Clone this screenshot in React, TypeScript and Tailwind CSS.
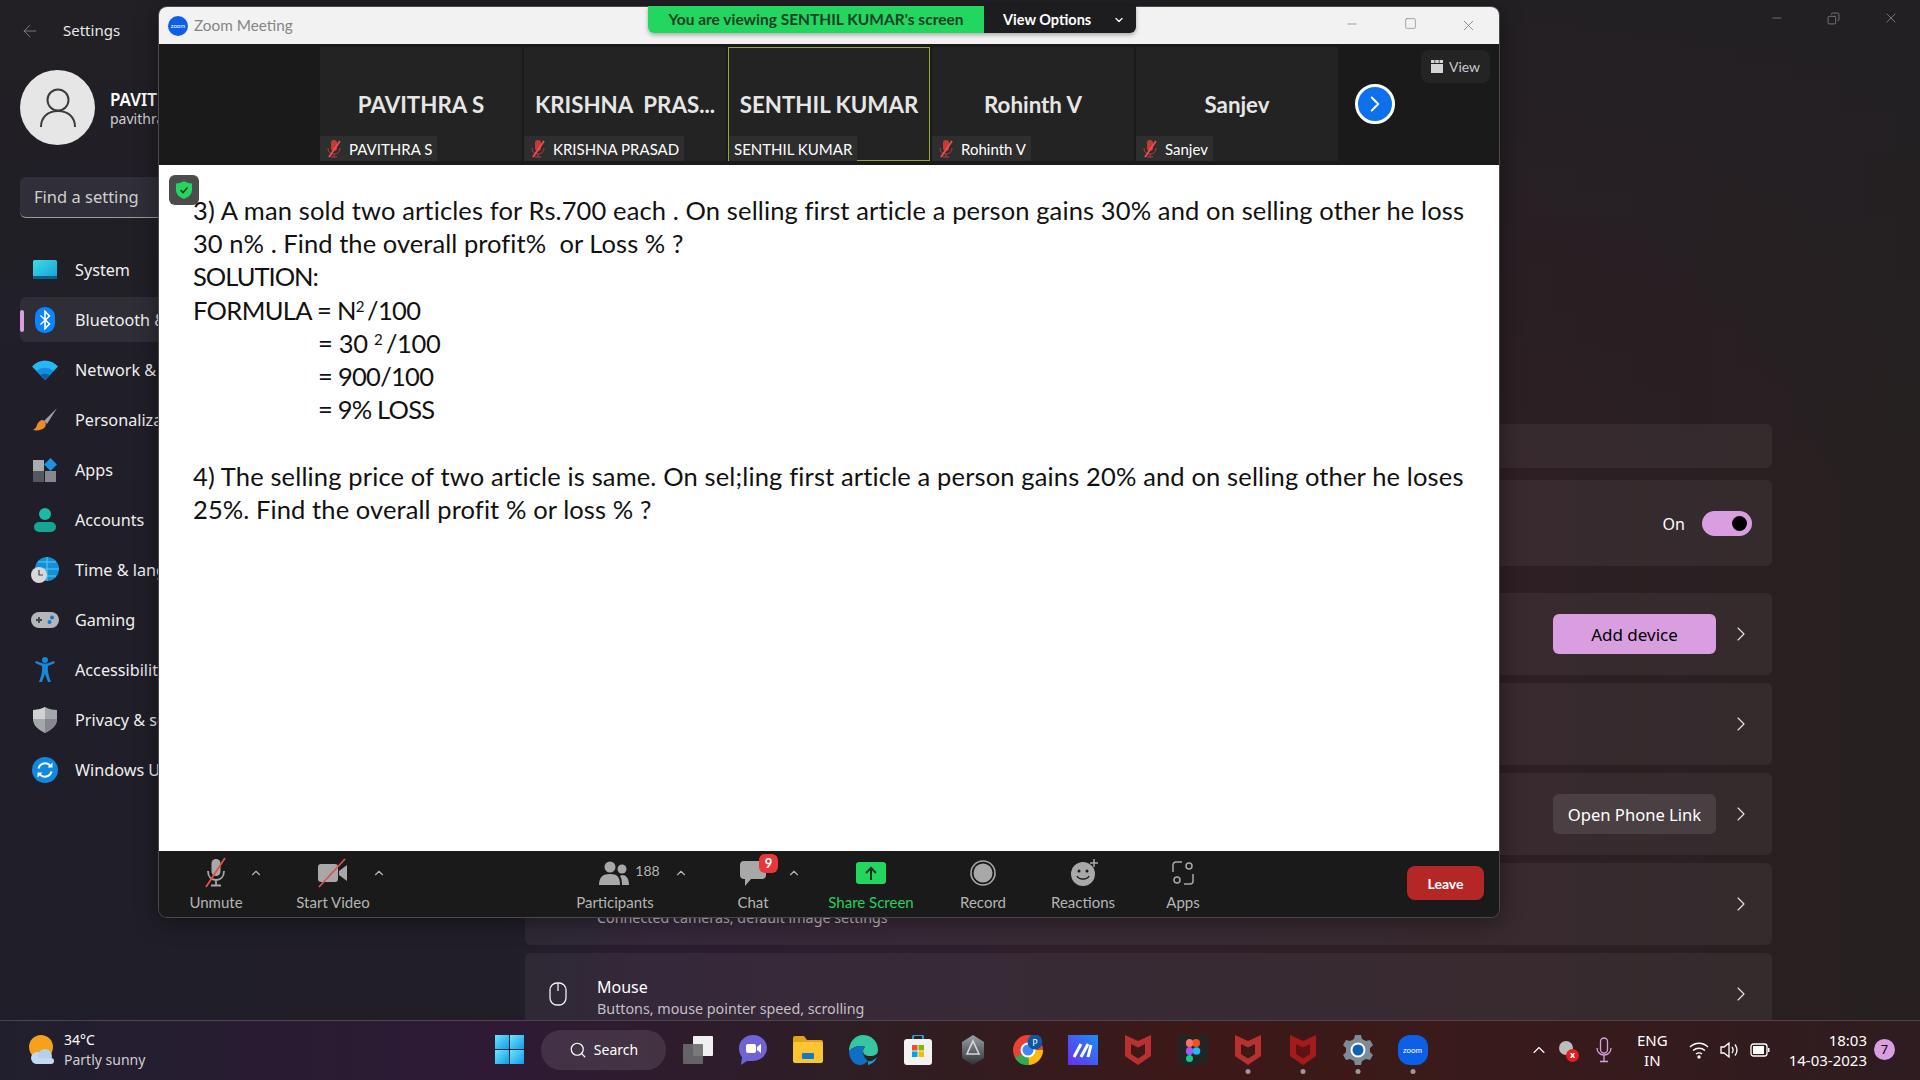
import type { ReactNode } from "react";
import { ChevronUp, ChevronDown, ChevronRight, Search, ArrowLeft, X, Minus, Square, Copy } from "lucide-react";

const segoe = "font-['Noto_Sans','Open_Sans',sans-serif]";

function SystemIcon() {
  return (
    <svg width="24" height="20" viewBox="0 0 24 20">
      <defs>
        <linearGradient id="sys" x1="0" y1="0" x2="1" y2="1">
          <stop offset="0" stopColor="#3fdde6" />
          <stop offset="1" stopColor="#14a0d8" />
        </linearGradient>
      </defs>
      <rect width="24" height="19" rx="1.5" fill="url(#sys)" />
      <path d="M0 16h24v1.5a1.5 1.5 0 0 1-1.5 1.5h-21A1.5 1.5 0 0 1 0 17.500z" fill="#0c5f86" />
    </svg>
  );
}

function BluetoothIcon() {
  return (
    <svg width="20" height="26" viewBox="0 0 20 26">
      <rect width="20" height="26" rx="9.500" fill="#0a84ff" />
      <path d="M5.500 8.500l9 8.500-4.500 4.500V4.500l4.500 4.500-9 8.500" fill="none" stroke="#fff" strokeWidth="1.600" />
    </svg>
  );
}

function WifiIcon() {
  return (
    <svg width="26" height="20" viewBox="0 0 26 20">
      <path d="M0 6.500C7-1.500 19-1.500 26 6.500L13 20z" fill="#29b6f6" />
      <path d="M4.500 11C9 6.500 17 6.500 21.500 11L13 20z" fill="#0f8fdc" />
      <path d="M8.500 15.300c2.500-2 6.500-2 9 0L13 20z" fill="#0a5fa8" />
    </svg>
  );
}

function BrushIcon() {
  return (
    <svg width="26" height="26" viewBox="0 0 26 26">
      <path d="M25 1L12 14l3 3z" fill="#9ca3a8" />
      <path d="M11 13c-3 0-5 2-6 5-.5 2-2 4-4 5 4 1 10 0 12-3 1.500-2 1-5-2-7z" fill="#f08a24" />
    </svg>
  );
}

function AppsIcon() {
  return (
    <svg width="24" height="24" viewBox="0 0 24 24">
      <rect x="0" y="2" width="11" height="11" fill="#a9adb2" />
      <rect x="0" y="13" width="11" height="11" fill="#55585c" />
      <rect x="12" y="13" width="11" height="11" fill="#85898e" />
      <path d="M17.500 0L24 6.500 17.500 13 11 6.500z" fill="#1e90e8" />
    </svg>
  );
}

function AccountIcon() {
  return (
    <svg width="22" height="24" viewBox="0 0 22 24">
      <circle cx="11" cy="6" r="6" fill="#1fb8a6" />
      <rect x="0" y="14" width="22" height="10" rx="5" fill="#14a594" />
    </svg>
  );
}

function TimeIcon() {
  return (
    <svg width="28" height="26" viewBox="0 0 28 26">
      <circle cx="16" cy="12" r="12" fill="#1490d8" />
      <path d="M16 0v24M4 12h24M7 5h18M7 19h18" stroke="#5cc8ee" strokeWidth="1" />
      <circle cx="8" cy="18" r="8" fill="#d8d8d8" />
      <path d="M8 13v5h4" fill="none" stroke="#444" strokeWidth="1.200" />
    </svg>
  );
}

function GamingIcon() {
  return (
    <svg width="28" height="16" viewBox="0 0 28 16">
      <rect width="28" height="16" rx="8" fill="#b3b7bb" />
      <path d="M5 8h6M8 5v6" stroke="#444" strokeWidth="1.800" />
      <circle cx="21" cy="5.500" r="2" fill="#1678d0" />
      <circle cx="18.500" cy="10" r="2" fill="#1678d0" />
    </svg>
  );
}

function AccessIcon() {
  return (
    <svg width="22" height="26" viewBox="0 0 22 26">
      <circle cx="11" cy="3" r="3" fill="#1687d9" />
      <path d="M1 6l7 3c.5 4 0 8-3 16h3l3-8 3 8h3c-3-8-3.500-12-3-16l7-3-1-2-7 2.500h-4L2 4z" fill="#1687d9" />
    </svg>
  );
}

function ShieldIcon() {
  return (
    <svg width="26" height="26" viewBox="0 0 26 26">
      <path d="M13 0c3 2 8 3 12 3v9c0 7-6 11-12 14C7 23 1 19 1 12V3c4 0 9-1 12-3z" fill="#a4a8ac" />
      <path d="M13 0c-3 2-8 3-12 3v9h12z" fill="#d0d2d4" />
      <path d="M13 12h12c0 7-6 11-12 14z" fill="#85898d" />
    </svg>
  );
}

function UpdateIcon() {
  return (
    <svg width="26" height="26" viewBox="0 0 26 26">
      <circle cx="13" cy="13" r="13" fill="#1088e0" />
      <path d="M6.500 11.500A6.800 6.800 0 0 1 18.500 9M19.500 14.500A6.800 6.800 0 0 1 7.500 17" fill="none" stroke="#fff" strokeWidth="2" />
      <path d="M20.500 5.500v5h-5zM5.500 20.500v-5h5z" fill="#fff" />
    </svg>
  );
}

const navItems: { label: string; icon: ReactNode; active?: boolean }[] = [
  { label: "System", icon: <SystemIcon /> },
  { label: "Bluetooth & devices", icon: <BluetoothIcon />, active: true },
  { label: "Network & internet", icon: <WifiIcon /> },
  { label: "Personalization", icon: <BrushIcon /> },
  { label: "Apps", icon: <AppsIcon /> },
  { label: "Accounts", icon: <AccountIcon /> },
  { label: "Time & language", icon: <TimeIcon /> },
  { label: "Gaming", icon: <GamingIcon /> },
  { label: "Accessibility", icon: <AccessIcon /> },
  { label: "Privacy & security", icon: <ShieldIcon /> },
  { label: "Windows Update", icon: <UpdateIcon /> },
];

function Sidebar() {
  return (
    <aside className="w-[525px] shrink-0 pl-5 pr-4">
      <div className="flex h-[61px] items-center text-[#e8e8e8]">
        <ArrowLeft size={20} strokeWidth={1} className="text-[#8a8a8a]" />
        <span className="ml-[23px] text-[15px]">Settings</span>
      </div>
      <div className="mt-[9px] flex items-center">
        <div className="flex h-[75px] w-[75px] items-center justify-center rounded-full bg-[#e6e6e6]">
          <svg width="38" height="40" viewBox="0 0 38 40" fill="none" stroke="#3c3c3c" strokeWidth="2">
            <circle cx="19" cy="12" r="10.500" />
            <path d="M2 39c0-10 7-16 17-16s17 6 17 16" />
          </svg>
        </div>
        <div className="ml-[15px] mt-[1px] leading-tight">
          <p className="text-[17px] font-semibold text-white">PAVITHRA S</p>
          <p className="text-[14px] text-[#cfcfcf]">pavithra@outlook.com</p>
        </div>
      </div>
      <div className="mt-8 flex h-[41px] items-center rounded-md border-b border-b-[#9a9a9a] bg-[#302e38] px-[14px] text-[16.500px] text-[#cfcfcf]">
        Find a setting
      </div>
      <nav className="mt-[29px] flex flex-col gap-[5px]">
        {navItems.map((item) => (
          <div key={item.label} className={`relative flex h-[45px] items-center rounded-md text-[16.200px] text-[#f0f0f0] ${item.active ? "bg-[#2f2d36]" : ""}`}>
            {item.active && <span className="absolute left-0 top-[13px] h-[22px] w-[4px] rounded bg-[#d89ee0]" />}
            <span className="flex w-[50px] justify-center">{item.icon}</span>
            <span className="ml-[5px] pt-[2px]">{item.label}</span>
          </div>
        ))}
      </nav>
    </aside>
  );
}

function Card({ className, children }: { className: string; children?: ReactNode }) {
  return <div className={`flex shrink-0 items-center rounded-md bg-white/5 pr-[19px] ${className}`}>{children}</div>;
}

function SettingsChevron() {
  return <ChevronRight size={24} strokeWidth={1.100} className="ml-[13px] text-[#e8e8e8]" />;
}

function MainPane() {
  return (
    <main className="flex-1 text-white">
      <div className="flex h-[36px] justify-end pr-[1px] text-[#8d8d8d]">
        <span className="flex w-[57px] items-center justify-center"><Minus size={14} strokeWidth={1.200} /></span>
        <span className="flex w-[57px] items-center justify-center"><Copy size={13} strokeWidth={1.400} className="-scale-x-100" /></span>
        <span className="flex w-[57px] items-center justify-center"><X size={16} strokeWidth={1.200} /></span>
      </div>
      <div className="mr-[148px] mt-[388px] flex flex-col">
        <Card className="h-[44px]" />
        <Card className="mt-3 h-[86px] justify-end">
          <span className="mr-[17px] pt-[2px] text-[16px]">On</span>
          <span className="flex h-[25px] w-[50px] items-center justify-end rounded-full bg-[#d89ee0] pr-[5px]">
            <span className="h-[15px] w-[15px] rounded-full bg-black" />
          </span>
          <span className="w-[1px]" />
        </Card>
        <Card className="mt-[27px] h-[82px] justify-end">
          <span className="flex h-[40px] w-[163px] items-center justify-center rounded-md bg-[#d89ee0] pt-[2px] text-[17px] text-black">Add device</span>
          <SettingsChevron />
        </Card>
        <Card className="mt-2 h-[82px] justify-end"><SettingsChevron /></Card>
        <Card className="mt-2 h-[82px] justify-end">
          <span className="flex h-[40px] w-[163px] items-center justify-center rounded-md bg-white/10 pt-[2px] text-[16.600px]">Open Phone Link</span>
          <SettingsChevron />
        </Card>
        <Card className="mt-2 h-[82px] justify-between">
          <p className="ml-[72px] mt-[27px] text-[14.300px] leading-[21px] text-[#c4bfc6]">Connected cameras, default image settings</p>
          <SettingsChevron />
        </Card>
        <Card className="mt-2 h-[82px] justify-between">
          <div className="flex items-center">
            <svg width="18" height="24" viewBox="0 0 18 24" fill="none" stroke="#f0f0f0" strokeWidth="1.300" className="ml-6 mr-[30px]">
              <rect x="1" y="1" width="16" height="22" rx="7" />
              <path d="M9 1v8" />
            </svg>
            <div className="pt-[7px] leading-[21px]">
              <p className="text-[16px]">Mouse</p>
              <p className="text-[14.300px] text-[#c4bfc6]">Buttons, mouse pointer speed, scrolling</p>
            </div>
          </div>
          <SettingsChevron />
        </Card>
      </div>
    </main>
  );
}

function MutedMic() {
  return (
    <svg width="14" height="18" viewBox="0 0 14 18" className="shrink-0">
      <rect x="4" y="0" width="6" height="11" rx="3" fill="#c23b3b" />
      <path d="M1 8c0 4 2.500 6 6 6s6-2 6-6M7 14v3M4 17h6" fill="none" stroke="#c23b3b" strokeWidth="1" />
      <path d="M13 1L2 17" stroke="#f25050" strokeWidth="1.800" />
    </svg>
  );
}

const tiles = [
  { name: "PAVITHRA S", label: "PAVITHRA S", muted: true },
  { name: "KRISHNA  PRAS...", label: "KRISHNA PRASAD", muted: true },
  { name: "SENTHIL KUMAR", label: "SENTHIL KUMAR", muted: false },
  { name: "Rohinth V", label: "Rohinth V", muted: true },
  { name: "Sanjev", label: "Sanjev", muted: true },
];

function ThumbStrip() {
  return (
    <div className="flex h-[121px] shrink-0 items-start bg-[#1a1a1a] pl-[161px] pt-[3px]">
      {tiles.map((t) => (
        <div
          key={t.label}
          className={`mr-[2px] flex h-[114px] w-[202px] flex-col justify-between bg-[#232323] ${t.muted ? "" : "ring-1 ring-inset ring-[#8fae2d]"}`}
        >
          <p className="mt-[45px] whitespace-pre text-center text-[22.300px] font-bold leading-[26px] text-[#e6e6e6]">{t.name}</p>
          <div className={`flex h-[25px] w-fit items-center bg-[#2e2e2e] pr-[5px] pt-[1px] text-[15px] text-white ${t.muted ? "gap-[8px] pl-[7px]" : "ml-[1px] pl-[5px]"}`}>
            {t.muted && <MutedMic />}
            <span>{t.label}</span>
          </div>
        </div>
      ))}
      <div className="ml-[15px] mt-[37px] flex h-[40px] w-[40px] items-center justify-center rounded-full border-[3px] border-white bg-[#0e71eb]">
        <ChevronRight size={26} strokeWidth={1.800} className="text-white" />
      </div>
      <div className="ml-[26px] mt-[3px] flex h-[33px] w-[69px] items-center justify-center gap-[6px] rounded-lg bg-[#242424] text-[14px] text-[#c8c8c8]">
        <svg width="12" height="13" viewBox="0 0 12 13" fill="#d4d4d4">
          <rect x="0" y="0" width="3.500" height="3" />
          <rect x="4.250" y="0" width="3.500" height="3" />
          <rect x="8.500" y="0" width="3.500" height="3" />
          <rect x="0" y="4" width="12" height="9" />
        </svg>
        View
      </div>
    </div>
  );
}

const lineClass = "h-[33.2px] whitespace-pre leading-[33.2px]";

function SharedContent() {
  return (
    <div className="relative h-[686px] shrink-0 bg-white pl-[34px] pt-[29px] font-['Lato',sans-serif] text-[25.5px] text-[#111] [font-variant-ligatures:none]">
      <div className="absolute left-[10px] top-[10px] flex h-[30px] w-[30px] items-center justify-center rounded-md bg-[#4c4c4c]">
        <svg width="16" height="18" viewBox="0 0 16 18">
          <path d="M8 0c2 1.500 5 2.500 8 2.500V9c0 4.500-4 7.500-8 9-4-1.500-8-4.500-8-9V2.500C3 2.500 6 1.500 8 0z" fill="#22d65f" />
          <path d="M4.500 9l2.500 2.500L11.500 6.500" fill="none" stroke="#1c3a24" strokeWidth="1.600" />
        </svg>
      </div>
      <p className={`${lineClass} tracking-[0.125px]`}>3) A man sold two articles for Rs.700 each . On selling first article a person gains 30% and on selling other he loss</p>
      <p className={`${lineClass} tracking-[0.06px]`}>30 n% . Find the overall profit%  or Loss % ?</p>
      <p className={`${lineClass} tracking-[-1px]`}>SOLUTION:</p>
      <p className={`${lineClass} tracking-[-0.65px]`}>FORMULA = N<sup className="text-[15px]">2 </sup>/100</p>
      <p className={`${lineClass} pl-[125px] tracking-[-0.3px]`}>= 30 <sup className="text-[15px]">2 </sup>/100</p>
      <p className={`${lineClass} pl-[125px] tracking-[-0.7px]`}>= 900/100</p>
      <p className={`${lineClass} pl-[125px] tracking-[-0.8px]`}>= 9% LOSS</p>
      <p className={lineClass}> </p>
      <p className={`${lineClass} tracking-[0.145px]`}>4) The selling price of two article is same. On sel;ling first article a person gains 20% and on selling other he loses</p>
      <p className={`${lineClass} tracking-[0.1px]`}>25%. Find the overall profit % or loss % ?</p>
    </div>
  );
}

function ToolItem({ icon, label, width, className = "", labelClass = "text-[#b4b4b4]" }: { icon: ReactNode; label: string; width: string; className?: string; labelClass?: string }) {
  return (
    <div className={`flex shrink-0 flex-col items-center ${width} ${className}`}>
      <div className="flex h-[34px] items-center justify-center pt-[10px]">{icon}</div>
      <span className={`mt-[7px] whitespace-nowrap text-[15px] leading-[20px] ${labelClass}`}>{label}</span>
    </div>
  );
}

function Caret({ className }: { className: string }) {
  return <ChevronUp size={14} strokeWidth={2} className={`mt-[15px] w-4 shrink-0 text-[#b4b4b4] ${className}`} />;
}

function Toolbar() {
  return (
    <div className="flex h-[66px] flex-1 items-start rounded-b-lg bg-[#1a1a1a] pl-[17px]">
      <ToolItem
        width="w-[80px]"
        label="Unmute"
        icon={
          <svg width="28" height="32" viewBox="0 0 28 32">
            <rect x="9.500" y="2" width="9" height="17" rx="4.500" fill="#a8a8a8" />
            <path d="M6 14c0 6 3.500 9 8 9s8-3 8-9M14 23v5M9 28.500h10" fill="none" stroke="#a8a8a8" strokeWidth="1.800" />
            <path d="M23 1L4 30" stroke="#e2504c" strokeWidth="1.800" />
          </svg>
        }
      />
      <Caret className="-ml-2" />
      <ToolItem
        width="w-[80px]"
        className="ml-[29px]"
        label="Start Video"
        icon={
          <svg width="32" height="30" viewBox="0 0 32 30">
            <rect x="1" y="6" width="20" height="18" rx="3" fill="#a8a8a8" />
            <path d="M22 13l8-6v16l-8-6z" fill="#a8a8a8" />
            <path d="M28 1L2 29" stroke="#e2504c" strokeWidth="1.800" />
          </svg>
        }
      />
      <Caret className="-ml-[2px]" />
      <ToolItem
        width="w-[100px]"
        className="ml-[178px]"
        label="Participants"
        icon={
          <div className="flex items-center gap-[6px] pl-[28px]">
            <svg width="31" height="24" viewBox="0 0 31 24" fill="#a8a8a8">
              <circle cx="12" cy="6" r="5.500" />
              <circle cx="24" cy="8" r="4.500" />
              <path d="M1 24c0-8 4-11 11-11s10 3 10 11z" />
              <path d="M24 14c4 0 7 3 7 10h-7c0-4-.5-7-2-9z" />
            </svg>
            <span className="-mt-[6px] text-[14px] text-[#b4b4b4]">188</span>
          </div>
        }
      />
      <Caret className="ml-2" />
      <ToolItem
        width="w-[60px]"
        className="ml-[34px]"
        label="Chat"
        icon={
          <div className="relative">
            <svg width="28" height="28" viewBox="0 0 28 28">
              <path d="M5 2h18a4 4 0 0 1 4 4v10a4 4 0 0 1-4 4H12l-6 7v-7H5a4 4 0 0 1-4-4V6a4 4 0 0 1 4-4z" fill="#a8a8a8" />
            </svg>
            <span className="absolute -right-[11px] -top-[5px] flex h-[19px] w-[19px] items-center justify-center rounded-md bg-[#e8373a] text-[13px] font-bold text-white">9</span>
          </div>
        }
      />
      <Caret className="ml-[3px]" />
      <ToolItem
        width="w-[100px]"
        className="ml-[19px]"
        label="Share Screen"
        labelClass="text-[#23d160]"
        icon={
          <span className="flex h-[22px] w-[30px] items-center justify-center rounded-[3px] bg-[#22d65f]">
            <svg width="12" height="14" viewBox="0 0 12 14" fill="none" stroke="#11331c" strokeWidth="2">
              <path d="M6 14V2M1 7l5-5 5 5" />
            </svg>
          </span>
        }
      />
      <ToolItem
        width="w-[70px]"
        className="ml-[27px]"
        label="Record"
        icon={
          <svg width="26" height="26" viewBox="0 0 26 26">
            <circle cx="13" cy="13" r="12" fill="none" stroke="#a8a8a8" strokeWidth="1.600" />
            <circle cx="13" cy="13" r="9.500" fill="#a8a8a8" />
          </svg>
        }
      />
      <ToolItem
        width="w-[80px]"
        className="ml-[25px]"
        label="Reactions"
        icon={
          <svg width="28" height="28" viewBox="0 0 28 28" className="ml-[3px]">
            <circle cx="12" cy="15" r="12" fill="#a8a8a8" />
            <circle cx="8" cy="12" r="1.500" fill="#1a1a1a" />
            <circle cx="16" cy="12" r="1.500" fill="#1a1a1a" />
            <path d="M6 17c2 4 10 4 12 0" fill="none" stroke="#1a1a1a" strokeWidth="1.500" />
            <path d="M23 0v8M19 4h8" stroke="#a8a8a8" strokeWidth="1.500" />
          </svg>
        }
      />
      <ToolItem
        width="w-[60px]"
        className="ml-[30px]"
        label="Apps"
        icon={
          <svg width="22" height="24" viewBox="0 0 22 24" fill="none" stroke="#a8a8a8" strokeWidth="1.500">
            <path d="M1 11V4a3 3 0 0 1 3-3h6M21 13v7a3 3 0 0 1-3 3h-6" />
            <circle cx="17" cy="5" r="3" />
            <circle cx="5" cy="19" r="3" />
          </svg>
        }
      />
      <div className="ml-auto mr-[15px] mt-[15px] flex h-[34px] w-[77px] items-center justify-center rounded-lg bg-[#b52727] text-[14px] font-bold text-white">
        Leave
      </div>
    </div>
  );
}

function ZoomWindow() {
  return (
    <section className="absolute left-[159px] top-[7px] flex h-[910px] w-[1340px] flex-col rounded-lg font-['Lato',sans-serif] shadow-[0_0_0_1px_#4a4a4a,0_4px_24px_rgba(0,0,0,0.45)]">
      <div className="relative flex h-[37px] shrink-0 items-center rounded-t-lg bg-[#f2f2f2] pl-[9px]">
        <span className="flex h-[20px] w-[20px] items-center justify-center rounded-full bg-[#0e5fe8] text-[6px] text-white">zoom</span>
        <span className="ml-[6px] text-[15.300px] text-[#858585]">Zoom Meeting</span>
        <div className="absolute left-[489px] -top-[1px] flex h-[27px] w-[488px] overflow-hidden rounded-b-md text-[15.500px] font-bold shadow-[0_2px_4px_rgba(0,0,0,0.3)]">
          <span className="flex w-[336px] items-center justify-center bg-[#22d65f] text-[#1d3f27]">You are viewing SENTHIL KUMAR's screen</span>
          <span className="flex flex-1 items-center bg-[#1d1d1f] pl-[19px] text-[14.500px] text-white">
            View Options
            <ChevronDown size={12} strokeWidth={2.500} className="ml-[22px]" />
          </span>
        </div>
        <div className="ml-auto flex pr-[2px] text-[#7e7e7e]">
          <span className="flex w-[58px] justify-center"><Minus size={14} strokeWidth={1.200} /></span>
          <span className="flex w-[58px] justify-center"><Square size={13} strokeWidth={1.200} /></span>
          <span className="flex w-[58px] justify-center"><X size={17} strokeWidth={1.200} /></span>
        </div>
      </div>
      <ThumbStrip />
      <SharedContent />
      <Toolbar />
    </section>
  );
}

function Windows11Logo() {
  return (
    <svg width="29" height="29" viewBox="0 0 29 29">
      <defs>
        <linearGradient id="win" x1="0" y1="0" x2="1" y2="1">
          <stop offset="0" stopColor="#6fe3fb" />
          <stop offset="1" stopColor="#0f9de8" />
        </linearGradient>
      </defs>
      <rect width="14" height="14" fill="url(#win)" />
      <rect x="15" width="14" height="14" fill="url(#win)" />
      <rect y="15" width="14" height="14" fill="url(#win)" />
      <rect x="15" y="15" width="14" height="14" fill="url(#win)" />
    </svg>
  );
}

function McAfee({ dark }: { dark?: boolean }) {
  return (
    <svg width="26" height="30" viewBox="0 0 26 30">
      <path d="M0 0l13 6 13-6v21l-13 9L0 21z" fill={dark ? "#a81a1a" : "#b93030"} />
      <path d="M6 9l7 3.500L20 9v10l-7 4.500L6 19z" fill={dark ? "#5a1414" : "#3f1818"} />
    </svg>
  );
}

function Dot() {
  return <span className="absolute bottom-[4px] left-1/2 h-[5px] w-[5px] -translate-x-1/2 rounded-full bg-[#9a9a9a]" />;
}

const taskIcons: { key: string; icon: ReactNode; running?: boolean }[] = [
  {
    key: "taskview",
    icon: (
      <svg width="30" height="28" viewBox="0 0 30 28">
        <rect x="10" y="0" width="20" height="20" rx="1" fill="#f0f0f0" />
        <rect x="0" y="8" width="20" height="20" rx="1" fill="#6c6c6c" fillOpacity="0.9" />
      </svg>
    ),
  },
  {
    key: "teams",
    icon: (
      <svg width="28" height="30" viewBox="0 0 28 30">
        <path d="M14 0c8 0 14 6 14 13s-6 13-14 13H8l-6 4 1-8C1 20 0 17 0 13 0 6 6 0 14 0z" fill="#6f63d6" />
        <rect x="7" y="9" width="10" height="9" rx="2" fill="#fff" />
        <path d="M18 12l4-3v9l-4-3z" fill="#fff" />
      </svg>
    ),
  },
  {
    key: "explorer",
    icon: (
      <svg width="30" height="27" viewBox="0 0 30 27">
        <path d="M0 2a2 2 0 0 1 2-2h9l3 4h14a2 2 0 0 1 2 2v4H0z" fill="#e3a21b" />
        <rect y="6" width="30" height="21" rx="2" fill="#fbc531" />
        <rect x="9" y="17" width="12" height="6" rx="1" fill="#1379c9" />
      </svg>
    ),
  },
  {
    key: "edge",
    icon: (
      <svg width="30" height="30" viewBox="0 0 30 30">
        <path d="M1 16C1 7 7 0 15 0c8 0 15 6 15 15 0 4-3 6-8 6-4 0-7-2-7-5 0-2 1-3 2-4-4-2-11-1-16 4z" fill="#35c7a1" />
        <path d="M1 16c5-5 12-6 16-4-1 1-2 2-2 4 0 3 1 7 5 10-2 2-5 4-8 4C6 30 1 24 1 16z" fill="#0f6fc4" />
        <path d="M20 26c3 1 6-1 9-4-2 5-5 7-9 8z" fill="#1a9ac8" />
      </svg>
    ),
  },
  {
    key: "store",
    icon: (
      <svg width="28" height="30" viewBox="0 0 28 30">
        <path d="M9 5V2a2 2 0 0 1 2-2h6a2 2 0 0 1 2 2v3" fill="none" stroke="#26a6e0" strokeWidth="1.800" />
        <rect y="4" width="28" height="26" rx="3" fill="#f2f2f2" />
        <rect x="8" y="10" width="5.500" height="5.500" fill="#f25022" />
        <rect x="14.500" y="10" width="5.500" height="5.500" fill="#7fba00" />
        <rect x="8" y="16.500" width="5.500" height="5.500" fill="#00a4ef" />
        <rect x="14.500" y="16.500" width="5.500" height="5.500" fill="#ffb900" />
      </svg>
    ),
  },
  {
    key: "hex",
    icon: (
      <svg width="26" height="30" viewBox="0 0 26 30">
        <defs>
          <linearGradient id="hex" x1="0" y1="0" x2="0" y2="1">
            <stop offset="0" stopColor="#9aa0a6" />
            <stop offset="1" stopColor="#2e3236" />
          </linearGradient>
        </defs>
        <path d="M13 0l11 7v16l-11 7L2 23V7z" fill="url(#hex)" />
        <path d="M13 6l6 13H7z" fill="none" stroke="#d5d8db" strokeWidth="1.600" />
      </svg>
    ),
  },
  {
    key: "chrome",
    icon: (
      <svg width="30" height="30" viewBox="0 0 30 30">
        <circle cx="15" cy="15" r="15" fill="#e94235" />
        <path d="M15 15L2 23a15 15 0 0 0 14 7z" fill="#34a853" />
        <path d="M15 15l1 15a15 15 0 0 0 14-15z" fill="#fbbc04" />
        <circle cx="15" cy="15" r="7.500" fill="#fff" />
        <circle cx="15" cy="15" r="5.500" fill="#4285f4" />
        <circle cx="22" cy="7" r="7.500" fill="#0b57a4" />
        <text x="22" y="10.500" textAnchor="middle" fontSize="9" fill="#fff">P</text>
      </svg>
    ),
  },
  {
    key: "monday",
    icon: (
      <svg width="30" height="30" viewBox="0 0 30 30">
        <defs>
          <linearGradient id="mon" x1="0" y1="1" x2="1" y2="0">
            <stop offset="0" stopColor="#6a2cf5" />
            <stop offset="1" stopColor="#1890f0" />
          </linearGradient>
        </defs>
        <rect width="30" height="30" fill="url(#mon)" />
        <path d="M6 22L13 9M13 22L20 9M20 22l3-12" fill="none" stroke="#fff" strokeWidth="3" />
      </svg>
    ),
  },
  { key: "mcafee1", icon: <McAfee /> },
  {
    key: "figma",
    icon: (
      <svg width="30" height="30" viewBox="0 0 30 30">
        <rect width="30" height="30" rx="2" fill="#242424" />
        <circle cx="18" cy="8" r="4" fill="#f24e1e" />
        <rect x="8" y="4" width="7" height="8" rx="3.500" fill="#ff7262" />
        <rect x="8" y="12" width="7" height="8" rx="3.500" fill="#a259ff" />
        <circle cx="18.500" cy="16" r="3.800" fill="#1abcfe" />
        <rect x="8" y="20" width="7" height="7" rx="3.500" fill="#0acf83" />
      </svg>
    ),
  },
  { key: "mcafee2", icon: <McAfee />, running: true },
  { key: "mcafee3", icon: <McAfee dark />, running: true },
  {
    key: "settings",
    icon: (
      <svg width="30" height="30" viewBox="0 0 30 30">
        <path d="M12 0h6l1 4 4 2 4-1 3 5-3 3v4l3 3-3 5-4-1-4 2-1 4h-6l-1-4-4-2-4 1-3-5 3-3v-4L0 10l3-5 4 1 4-2z" fill="#7e8a95" />
        <circle cx="15" cy="15" r="7.500" fill="#fff" />
        <circle cx="15" cy="15" r="5.500" fill="#0f62b4" />
      </svg>
    ),
    running: true,
  },
  {
    key: "zoom",
    icon: (
      <span className="flex h-[30px] w-[30px] items-center justify-center rounded-[12px] bg-[#0e5fe8] font-['Lato',sans-serif] text-[8px] text-white">zoom</span>
    ),
    running: true,
  },
];

function Taskbar() {
  return (
    <footer className="flex h-[60px] shrink-0 items-center border-t border-t-[#4c4448] bg-[linear-gradient(90deg,#211f2e_0%,#2e1a35_25%,#2e1e24_45%,#3d1818_62%,#3a1a1a_75%,#2e1c20_100%)] pb-[2px] text-white">
      <div className="flex w-[482px] shrink-0 items-center pl-7">
        <svg width="27" height="30" viewBox="0 0 27 30">
          <circle cx="13" cy="12" r="12" fill="#f4a11d" />
          <circle cx="9" cy="23" r="6" fill="#c3d9f2" />
          <circle cx="17" cy="21" r="7" fill="#b5cff0" />
          <rect x="6" y="23" width="20" height="6" rx="3" fill="#c3d9f2" />
        </svg>
        <div className="ml-[9px] text-[14px] leading-[20px]">
          <p>34°C</p>
          <p className="text-[#d0cdd2]">Partly sunny</p>
        </div>
      </div>
      <span className="flex w-[55px] shrink-0 justify-center"><Windows11Logo /></span>
      <div className="ml-[4px] flex h-[40px] w-[125px] shrink-0 items-center justify-center gap-[7px] rounded-full bg-white/10 text-[14px]">
        <Search size={18} strokeWidth={1.600} />
        Search
      </div>
      <div className="ml-[4px] flex shrink-0">
        {taskIcons.map((t) => (
          <span key={t.key} className="relative flex h-[57px] w-[55px] items-center justify-center">
            {t.icon}
            {t.running && <Dot />}
          </span>
        ))}
      </div>
      <div className="ml-[89px] flex items-center">
        <ChevronUp size={20} strokeWidth={1.300} />
        <span className="relative ml-[10px] h-[24px] w-[20px]">
          <span className="absolute left-0 top-[3px] h-[14px] w-[14px] rounded-full bg-[#bdbdbd]" />
          <span className="absolute bottom-0 right-0 flex h-[13px] w-[13px] items-center justify-center rounded-full bg-[#e02020] text-[9px] font-bold">x</span>
        </span>
        <svg width="16" height="26" viewBox="0 0 16 26" fill="none" stroke="#d89ee0" strokeWidth="1.300" className="ml-[17px]">
          <rect x="4.500" y="1" width="7" height="15" rx="3.500" />
          <path d="M1 11c0 4 3 7 7 7s7-3 7-7M8 18v6M4 24.500h8" />
        </svg>
      </div>
      <div className="ml-[25px] flex flex-col items-center text-[15px] leading-[20px]">
        <span>ENG</span>
        <span>IN</span>
      </div>
      <div className="ml-[21px] flex items-center gap-[11px]">
        <svg width="20" height="18" viewBox="0 0 20 18" fill="none" stroke="#fff" strokeWidth="1.400">
          <path d="M1 6c5-5 13-5 18 0M4 9.500c3.500-3 8.500-3 12 0M7 13c2-1.500 4-1.500 6 0" />
          <circle cx="10" cy="16" r="1" fill="#fff" />
        </svg>
        <svg width="20" height="18" viewBox="0 0 20 18" fill="none" stroke="#fff" strokeWidth="1.300">
          <path d="M1 6v6h3l5 4V2L4 6zM12 6c1.500 2 1.500 4 0 6M15 3.500c2.500 3.500 2.500 7.500 0 11" />
        </svg>
        <svg width="20" height="14" viewBox="0 0 20 14" className="-ml-[1px]">
          <rect x="1" y="1" width="16" height="12" rx="2.500" fill="none" stroke="#fff" strokeWidth="1.300" />
          <rect x="3" y="3" width="11" height="8" fill="#fff" />
          <rect x="18" y="5" width="1.500" height="4" fill="#fff" />
        </svg>
      </div>
      <div className="ml-[19px] flex flex-col items-end text-[15px] leading-[20px]">
        <span>18:03</span>
        <span>14-03-2023</span>
      </div>
      <span className="ml-[7px] flex h-[21px] w-[21px] items-center justify-center rounded-full bg-[#d89ee0] text-[13px] text-black">7</span>
    </footer>
  );
}

export default function App() {
  return (
    <div className={`relative flex h-[1080px] w-[1920px] flex-col overflow-hidden bg-[linear-gradient(180deg,rgba(34,32,36,0.9)_0%,rgba(34,32,36,0)_45%),linear-gradient(90deg,#201e28_0%,#211e28_26%,#2a1d30_34%,#2e1f2a_55%,#2e1f24_78%,#262020_100%)] ${segoe}`}>
      <div className="flex h-[1020px] shrink-0 overflow-hidden">
        <Sidebar />
        <MainPane />
      </div>
      <Taskbar />
      <ZoomWindow />
    </div>
  );
}
